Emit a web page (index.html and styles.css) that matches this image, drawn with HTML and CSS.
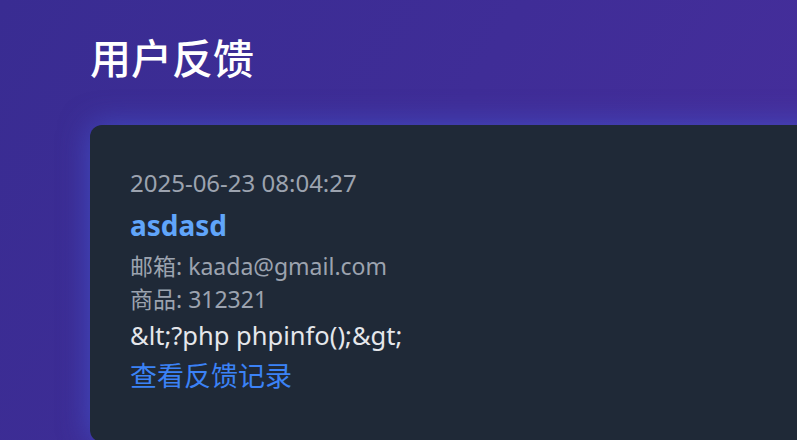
FILE: index.html
```html
<!DOCTYPE html>
<html lang="zh-CN">
<head>
<meta charset="utf-8">
<title>用户反馈</title>
<link rel="stylesheet" href="styles.css">
</head>
<body>
<main class="page">
  <h1 class="title">用户反馈</h1>
  <section class="card">
    <p class="time">2025-06-23 08:04:27</p>
    <p class="name">asdasd</p>
    <p class="meta">邮箱: kaada@gmail.com</p>
    <p class="meta">商品: 312321</p>
    <p class="content">&amp;lt;?php phpinfo();&amp;gt;</p>
    <a class="link" href="#">查看反馈记录</a>
  </section>
</main>
</body>
</html>
```
FILE: styles.css
```css
html, body {
  margin: 0;
  padding: 0;
}
body {
  min-height: 100vh;
  overflow: hidden;
  background: linear-gradient(120deg, #392c92 0%, #3f2d97 50%, #472e9c 100%);
  font-family: "Noto Sans", "Noto Sans CJK SC", sans-serif;
  color: #e5e7eb;
}
.page {
  padding: 28px 0 0 90px;
  width: 1000px;
}
.title {
  margin: 0 0 41px;
  font-family: "Noto Sans CJK SC", sans-serif;
  font-size: 41px;
  font-weight: 500;
  line-height: 56px;
  color: #ffffff;
}
.card {
  display: flex;
  flex-direction: column;
  align-items: flex-start;
  background: #1f2937;
  border-radius: 12px;
  padding: 41px 40px 44px;
  box-shadow: 0 0 30px rgba(70, 100, 230, 0.55);
}
.card p {
  margin: 0;
}
.time {
  font-size: 24px;
  line-height: 34px;
  color: #9ca3af;
}
.name {
  font-size: 28px;
  font-weight: 700;
  line-height: 50px;
  color: #60a5fa;
}
.meta {
  font-size: 23px;
  line-height: 33px;
  color: #9ca3af;
}
.content {
  font-size: 25.5px;
  line-height: 38px;
  color: #e5e7eb;
}
.link {
  font-size: 27px;
  line-height: 44px;
  color: #3b82f6;
  text-decoration: none;
}
```
